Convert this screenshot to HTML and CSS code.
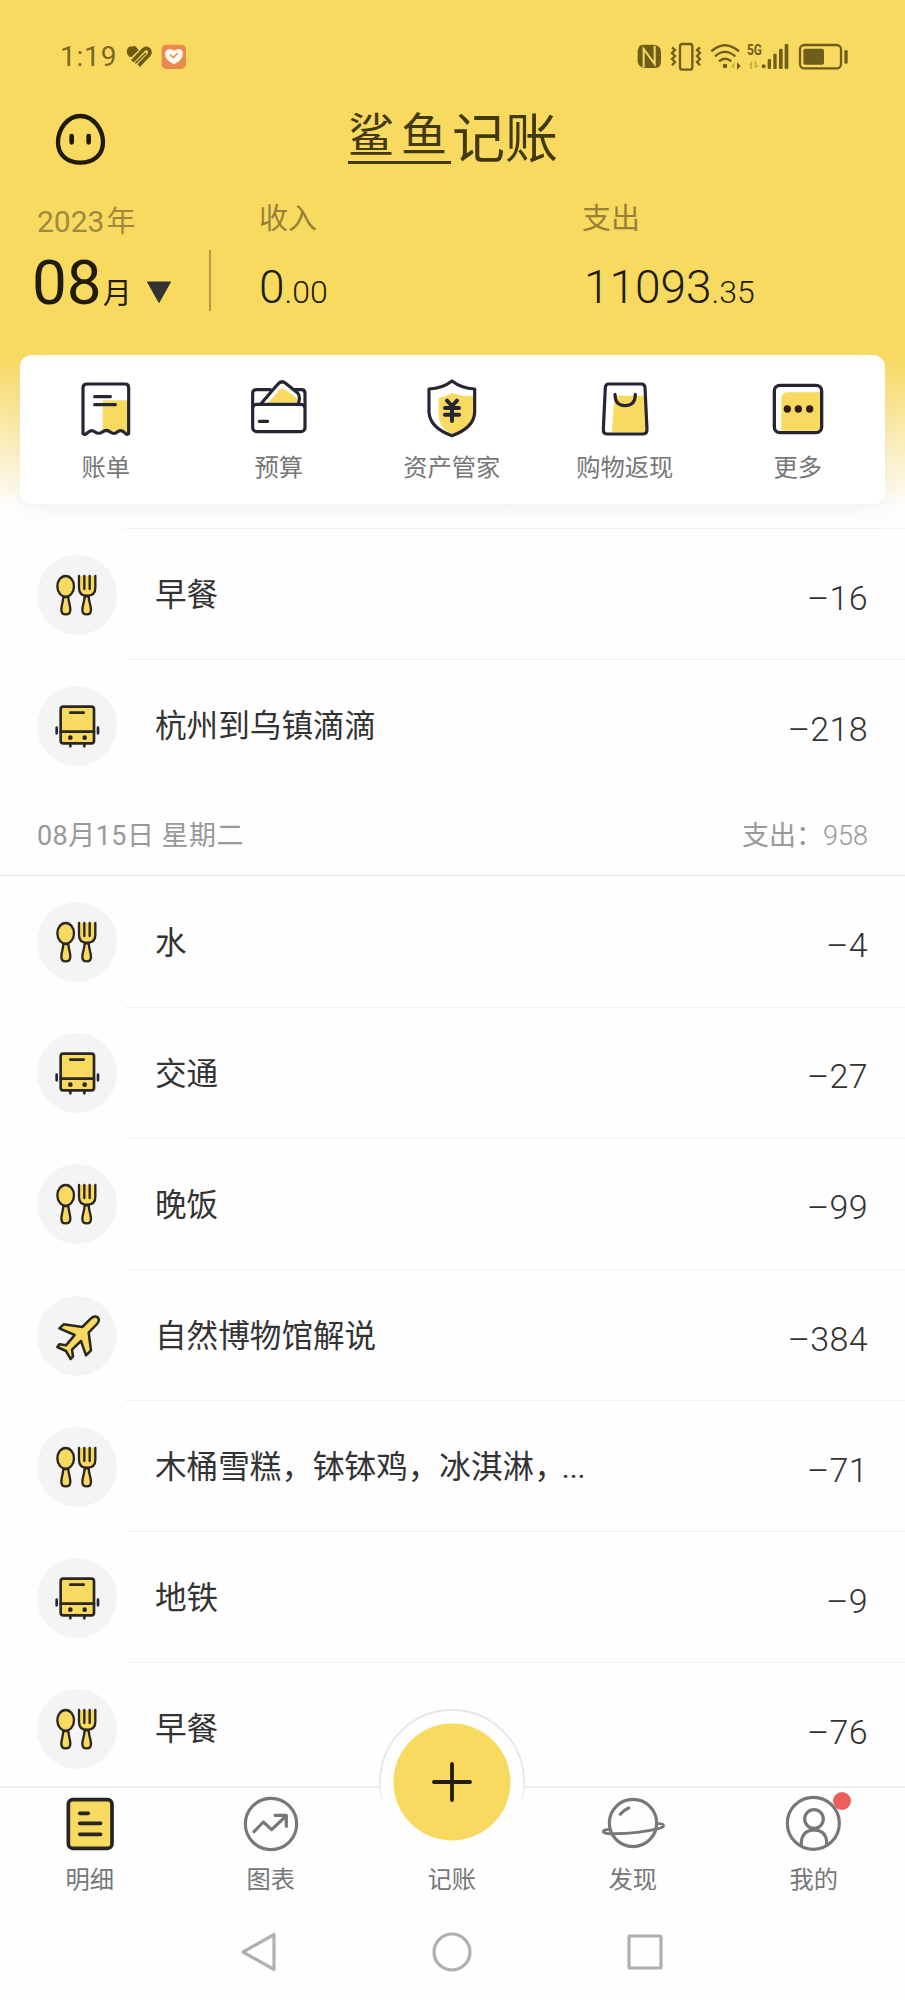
FILE: index.html
```html
<!DOCTYPE html>
<html lang="zh-CN">
<head>
<meta charset="utf-8">
<title>鲨鱼记账</title>
<link rel="stylesheet" href="styles.css">
</head>
<body>
<svg class="defs" aria-hidden="true">
  <symbol id="food" viewBox="141 134 180 180">
    <g fill="#f8da61" stroke="#2a2620" stroke-width="7" stroke-linejoin="round" stroke-linecap="round">
      <path d="M190 230 C189 247 184 256 184 268 Q184 282 197 282 Q211 282 211 268 C211 256 206 247 205 230Z"/>
      <ellipse cx="197" cy="198" rx="25" ry="31"/>
      <path d="M254 228 C253 247 247 256 247 268 Q247 282 260 282 Q273 282 273 268 C273 256 267 247 266 228Z"/>
      <path d="M237 167 V202 Q237 226 261 226 Q286 226 286 202 V167" />
      <path d="M253 167 V206 M269 167 V206" fill="none"/>
    </g>
  </symbol>
  <symbol id="bus" viewBox="141 526 180 180">
    <g fill="none" stroke="#2a2620" stroke-width="8" stroke-linejoin="round" stroke-linecap="round">
      <path d="M170 621 V638 M294 621 V638 M211 670 V677 M253 670 V677" stroke="#25253a"/>
      <rect x="182" y="558" width="100" height="110" rx="8" fill="#f8da61"/>
      <path d="M182 633 H282 M211 576 H251"/>
    </g>
    <circle cx="211" cy="651" r="7" fill="#2a2620"/><circle cx="254" cy="651" r="7" fill="#2a2620"/>
  </symbol>
  <symbol id="plane" viewBox="141 75 180 180">
    <path d="M272 113 Q283 103 293 109 Q301 117 291 129 L266 155 Q270 185 273 208 L258 223 L243 180 L216 206 L219 226 L212 234 L198 210 L172 198 L178 190 L198 193 L224 162 L178 142 L191 130 L247 138 Z" fill="#f8da61" stroke="#2a2620" stroke-width="7.5" stroke-linejoin="round"/>
  </symbol>
</svg>
<div class="screen">
  <header class="status">
    <span class="clock">1:19</span>
    <svg class="status-left" viewBox="376 66 190 88">
      <g fill="none" stroke="#6f5a13" stroke-width="11">
        <path d="M388 106 L411 84" stroke-width="18"/>
        <path d="M398 124 L427 94 Q437 80 447 88 Q456 98 444 109 L417 137"/>
        <path d="M407 130 L439 99" stroke-width="5"/>
      </g>
      <path d="M381 95 Q382 79 399 79 Q408 79 414 86 L389 111 Q381 103 381 95Z" fill="#6f5a13"/>
      <rect x="486" y="74" width="73" height="73" rx="14" fill="#e98950"/>
      <path d="M523 133 Q497 121 496 101 Q498 86 511 87 Q519 87 523 92 Q528 87 536 87 Q549 88 550 101 Q549 121 523 133Z" fill="#fff8ec"/>
      <path d="M511 104 L521 113 L535 99" fill="none" stroke="#e59a68" stroke-width="5"/>
    </svg>
    <svg class="status-right" viewBox="545 60 645 95">
      <path d="M568 74 H601 Q623 76 623 96 V125 Q622 143 608 144 H577 Q554 143 553 124 V94 Q555 75 568 74Z" fill="#6f5d1a"/>
      <path d="M571 141 V87 L604 132 V78" fill="none" stroke="#f8da61" stroke-width="6"/>
      <g fill="none" stroke="#6f5d1a" stroke-width="7">
        <rect x="680" y="72" width="37" height="77" rx="7"/>
        <path d="M656 82 L665 90 L656 99 L665 108 L656 117 L665 126 L656 136" />
        <path d="M740 82 L731 90 L740 99 L731 108 L740 117 L731 126 L740 136" />
        <path d="M774 94 Q814 57 857 94 M785 109 Q814 82 846 109 M797 124 Q815 108 834 124"/>
        <rect x="1040" y="75" width="123" height="70" rx="13"/>
      </g>
      <circle cx="815" cy="138" r="7" fill="#6f5d1a"/>
      <path d="M843 127 V148 L834 138Z M886 135 L896 123 V146 H890 V135Z M904 123 V146 L919 136 H909 V123Z" fill="#cbad48"/>
      <path d="M851 127 V149 L862 138Z" fill="#6f5d1a"/>
      <text class="net" x="881" y="104" textLength="45" lengthAdjust="spacingAndGlyphs">5G</text>
      <g fill="#6f5d1a">
        <circle cx="931" cy="139" r="6"/>
        <rect x="943" y="117" width="10" height="30" rx="3"/><rect x="960" y="101" width="10" height="46" rx="3"/>
        <rect x="977" y="86" width="11" height="61" rx="3"/><rect x="994" y="72" width="11" height="75" rx="3"/>
        <rect x="1050" y="86" width="62" height="48" rx="6"/><rect x="1173" y="90" width="10" height="41" rx="4"/>
      </g>
    </svg>
  </header>

  <div class="titlebar">
    <svg class="avatar" viewBox="160 275 165 165">
      <path d="M242 287 C280 287 310 326 310 366 C310 405 280 427 242 427 C204 427 175 405 175 366 C175 326 204 287 242 287Z" fill="none" stroke="#1f1b08" stroke-width="13"/>
      <path d="M216 347 V366 M267 347 V366" stroke="#1f1b08" stroke-width="14" stroke-linecap="round"/>
    </svg>
    <h1 class="brand"><span class="brand-shark">鲨鱼</span><span>记账</span></h1>
  </div>

  <section class="summary">
    <div class="month">
      <div class="year">2023<span class="cjk">年</span></div>
      <div class="month-pick"><b>08</b><span class="cjk">月</span>
        <svg class="caret" viewBox="0 0 26 23"><path d="M1.5 1 H24.5 L13 21.5Z" fill="#333" stroke="#333" stroke-linejoin="round"/></svg>
      </div>
    </div>
    <div class="rule"></div>
    <div class="sum income"><div class="sum-label">收入</div><div class="sum-value">0<small>.00</small></div></div>
    <div class="sum expense"><div class="sum-label">支出</div><div class="sum-value">11093<small>.35</small></div></div>
  </section>

  <nav class="card">
    <a class="quick">
      <svg viewBox="229 86 180 180"><path d="M309 150 H388 V246 L380 247 L368 240 L356 247 L342 240 L331 247 L320 240 L309 245Z" fill="#f8da61"/>
        <g fill="none" stroke="#252533" stroke-width="9.5" stroke-linejoin="round" stroke-linecap="round"><path d="M250 250 V112 Q250 101 262 101 H376 Q387 101 387 112 V250 Q382 255 376 248 Q365 236 354 244 Q343 253 332 245 Q320 236 308 245 Q297 253 285 244 Q275 236 264 247 Q256 256 250 250Z"/><path d="M285 139 H332 M285 163 H347"/></g></svg>
      <span>账单</span></a>
    <a class="quick">
      <svg viewBox="747 86 180 180"><path d="M804 157 L839 119 Q848 112 857 119 L890 143 Q897 150 890 157Z" fill="#f8da61"/>
        <g fill="none" stroke="#252533" stroke-width="9.5" stroke-linejoin="round" stroke-linecap="round"><rect x="758" y="162" width="157" height="82" rx="12"/><path d="M758 170 V129 Q758 118 769 118 H811 M882 118 H904 Q915 118 915 129 V170 M784 159 L834 101 Q844 89 856 98 L892 127 Q902 136 896 157 M778 213 H803"/></g></svg>
      <span>预算</span></a>
    <a class="quick">
      <svg viewBox="1266 86 180 180"><path d="M1316 143 Q1340 138 1357 128 Q1382 139 1422 137 V190 Q1418 232 1360 252 Q1316 235 1316 190Z" fill="#f8da61"/>
        <g fill="none" stroke="#252533" stroke-width="9.5" stroke-linejoin="round" stroke-linecap="round"><path d="M1356 92 Q1384 114 1424 116 V186 Q1422 232 1356 256 Q1290 232 1287 186 V116 Q1328 114 1356 92Z"/><path stroke-width="12" d="M1341 151 L1356 167 L1371 151 M1335 173 H1377 M1335 193 H1377 M1356 167 V212"/></g></svg>
      <span>资产管家</span></a>
    <a class="quick">
      <svg viewBox="426 86 180 180"><path d="M484 136 H575 L581 246 H477Z" fill="#f8da61"/>
        <g fill="none" stroke="#252533" stroke-width="9.5" stroke-linejoin="round" stroke-linecap="round"><path d="M467 101 H565 Q575 101 576 111 L582 238 Q582 250 571 251 H461 Q450 250 451 238 L457 111 Q458 101 467 101Z"/><path d="M486 132 Q486 166 516 166 Q547 166 547 132"/></g></svg>
      <span>购物返现</span></a>
    <a class="quick">
      <svg viewBox="945 86 180 180"><path d="M985 144 Q986 127 1003 126 H1104 V241 H985Z" fill="#f8da61"/>
        <rect x="964" y="105" width="142" height="142" rx="17" fill="none" stroke="#252533" stroke-width="10"/>
        <g fill="#2f1d10"><circle cx="1003" cy="176" r="11"/><circle cx="1036" cy="176" r="11"/><circle cx="1070" cy="176" r="11"/></g></svg>
      <span>更多</span></a>
  </nav>

  <main class="list">
    <ul class="rows lead">
      <li class="row"><i class="badge"><svg><use href="#food"/></svg></i><div class="cell"><span class="name">早餐</span><span class="amount">–16</span></div></li>
      <li class="row"><i class="badge"><svg><use href="#bus"/></svg></i><div class="cell"><span class="name">杭州到乌镇滴滴</span><span class="amount">–218</span></div></li>
    </ul>
    <div class="day"><span class="date">08月15日 星期二</span><span>支出：<em>958</em></span></div>
    <ul class="rows">
      <li class="row"><i class="badge"><svg><use href="#food"/></svg></i><div class="cell"><span class="name">水</span><span class="amount">–4</span></div></li>
      <li class="row"><i class="badge"><svg><use href="#bus"/></svg></i><div class="cell"><span class="name">交通</span><span class="amount">–27</span></div></li>
      <li class="row"><i class="badge"><svg><use href="#food"/></svg></i><div class="cell"><span class="name">晚饭</span><span class="amount">–99</span></div></li>
      <li class="row"><i class="badge"><svg><use href="#plane"/></svg></i><div class="cell"><span class="name">自然博物馆解说</span><span class="amount">–384</span></div></li>
      <li class="row"><i class="badge"><svg><use href="#food"/></svg></i><div class="cell"><span class="name">木桶雪糕，钵钵鸡，冰淇淋，<span class="dots">...</span></span><span class="amount">–71</span></div></li>
      <li class="row"><i class="badge"><svg><use href="#bus"/></svg></i><div class="cell"><span class="name">地铁</span><span class="amount">–9</span></div></li>
      <li class="row"><i class="badge"><svg><use href="#food"/></svg></i><div class="cell"><span class="name">早餐</span><span class="amount">–76</span></div></li>
    </ul>
  </main>

  <footer class="tabs">
    <a class="tab">
      <svg viewBox="180 342 180 180"><rect x="205" y="359" width="131" height="146" rx="13" fill="#f8da61" stroke="#252522" stroke-width="11"/><path d="M239 400 H265 M239 430 H302 M239 463 H302" stroke="#252522" stroke-width="11" stroke-linecap="round"/></svg>
      <span>明细</span></a>
    <a class="tab">
      <svg viewBox="723 342 180 180"><g fill="none" stroke="#777" stroke-width="9.5" stroke-linecap="round" stroke-linejoin="round"><circle cx="813" cy="432" r="77"/><path d="M762 455 L790 426 L815 449 L858 408 M825 406 H859 V439"/></g></svg>
      <span>图表</span></a>
    <a class="tab add">
      <svg class="fab" viewBox="0 0 150 150">
        <defs><linearGradient id="edge" x1="0" y1="0" x2="0" y2="150" gradientUnits="userSpaceOnUse"><stop offset=".5" stop-color="#e6e6e9"/><stop offset=".66" stop-color="#fefefe"/></linearGradient></defs>
        <circle cx="75" cy="75" r="72" fill="#fefefe" stroke="url(#edge)" stroke-width="1.8"/>
        <circle cx="75" cy="75" r="58.5" fill="#f8da61"/>
        <path d="M57 75 H93 M75 57 V93" stroke="#211d10" stroke-width="3.8" stroke-linecap="round"/>
      </svg>
      <span>记账</span></a>
    <a class="tab">
      <svg viewBox="450 342 180 180" overflow="visible"><g fill="none" stroke="#777" stroke-width="9.5" stroke-linecap="round" stroke-linejoin="round"><circle cx="540" cy="429" r="71"/><path d="M502 403 Q512 390 527 384"/><path d="M614 431 C636 430 637 440 619 445 Q548 463 466 461 C445 459 446 448 470 448" stroke-width="8.5"/></g></svg>
      <span>发现</span></a>
    <a class="tab me">
      <svg viewBox="993 342 180 180"><g fill="none" stroke="#777" stroke-width="9.5"><circle cx="1081" cy="430" r="78"/><circle cx="1083" cy="417" r="28"/><path d="M1045 496 V486 Q1048 451 1083 450 Q1119 451 1121 486 V496"/></g></svg>
      <i class="dot"></i>
      <span>我的</span></a>
  </footer>

  <div class="sysnav">
    <svg viewBox="0 0 40 42"><path d="M35 3.5 V38.5 L4 21Z"/></svg>
    <svg viewBox="0 0 40 42"><circle cx="20" cy="21" r="18"/></svg>
    <svg viewBox="0 0 40 42"><rect x="4" y="5" width="32" height="32" rx="1"/></svg>
  </div>
</div>
</body>
</html>
```

FILE: styles.css
```css
* { box-sizing: border-box; }

body {
  margin: 0;
  font-family: Roboto, "Noto Sans CJK SC", sans-serif;
  color: #333;
}

.defs { display: none; }
svg { display: block; flex: none; }

.screen {
  width: 905px;
  height: 2000px;
  display: flex;
  flex-direction: column;
  overflow: hidden;
  background: #fefefe linear-gradient(#f8da61 0, #f8da61 358px, #fefefe 508px);
}

/* status bar */
.status {
  display: flex;
  height: 106px;
  padding: 40px 55px 0 60px;
  flex: none;
}
.clock {
  width: 65px;
  line-height: 34px;
  font-size: 28px;
  letter-spacing: 0.8px;
  color: #7c6620;
}
.status-left { width: 63.3px; height: 29.3px; margin-top: 2px; }
.status-right { width: 215px; height: 31.7px; margin-left: auto; }
.net { font-family: Roboto, sans-serif; font-size: 44px; font-weight: 700; fill: #6f5d1a; }

/* title */
.titlebar {
  display: flex;
  height: 84px;
  padding: 6px 0 0 53px;
  flex: none;
}
.avatar { width: 55px; height: 55px; }
.brand {
  display: flex;
  margin: 0 0 0 240px;
  font-weight: 400;
  font-size: 53px;
  line-height: 57px;
  color: #43390f;
}
.brand-shark {
  width: 103px;
  height: 52px;
  margin-right: 1px;
  border-bottom: 3.5px solid #43390f;
  font-size: 46px;
  line-height: 46px;
  letter-spacing: 7px;
  white-space: nowrap;
}

/* monthly summary */
.summary {
  display: flex;
  height: 165px;
  flex: none;
}
.month { width: 209px; padding: 13px 0 0 32px; }
.year {
  display: flex;
  align-items: baseline;
  padding-left: 5px;
  font-size: 30px;
  line-height: 38px;
  color: #9f8a3e;
}
.year .cjk { font-size: 29px; margin-left: 2px; }
.month-pick {
  display: flex;
  align-items: baseline;
  line-height: 64px;
  margin-top: 10px;
  color: #211c07;
}
.month-pick b { font-weight: 400; font-size: 62px; }
.month-pick .cjk { font-size: 29px; margin-left: 1px; }
.caret { width: 26px; height: 23px; margin: 0 0 2px 14px; }
.rule { width: 2px; height: 61px; margin-top: 60px; background: #b39b45; }
.sum { padding-top: 11px; }
.income { width: 322px; padding-left: 48px; }
.expense { padding-left: 49px; }
.expense .sum-value { padding-left: 2px; }
.sum-label { font-size: 29px; line-height: 36px; color: #978137; }
.sum-value {
  margin-top: 22px;
  font-size: 46px;
  line-height: 56px;
  font-weight: 300;
  color: #211c07;
}
.sum-value small { font-size: 32px; }

/* shortcuts */
.card {
  display: grid;
  grid-template-columns: repeat(5, 1fr);
  height: 149px;
  margin: 0 20px;
  padding-top: 24px;
  flex: none;
  border-radius: 12px;
  background: #fff;
  box-shadow: 0 8px 22px rgba(190, 190, 215, 0.15);
}
.quick, .tab {
  display: flex;
  flex-direction: column;
  align-items: center;
  font-size: 24.3px;
  line-height: 36px;
  color: #777;
}
.quick { padding-right: 1.5px; }
.quick svg { width: 60px; height: 60px; margin-bottom: 11px; }

/* records */
.list { flex: 1; min-height: 0; overflow: hidden; padding-top: 24px; }
.rows { margin: 0; padding: 0; list-style: none; }
.row {
  display: flex;
  align-items: center;
  height: 131.1px;
  padding-left: 37px;
}
.badge {
  display: flex;
  align-items: center;
  justify-content: center;
  width: 80px;
  height: 80px;
  margin-top: 2px;
  border-radius: 50%;
  background: #f4f4f4;
  flex: none;
}
.badge svg { width: 60px; height: 60px; }
.cell {
  display: flex;
  align-items: center;
  justify-content: space-between;
  flex: 1;
  height: 100%;
  margin-left: 8px;
  padding: 0 37px 0 30px;
  border-top: 1px solid #f2f2f2;
}
.rows:not(.lead) .row:first-child .cell { border-top-color: transparent; }
.name { font-size: 31.6px; line-height: 46px; padding-top: 4px; }
.dots { font-size: 30px; margin-left: -4px; }
.amount { font-size: 34px; line-height: 44px; font-weight: 300; letter-spacing: 0.4px; padding-top: 7px; }
.day {
  display: flex;
  justify-content: space-between;
  height: 85.5px;
  padding: 27px 37px 0;
  border-bottom: 1px solid #e2e2e2;
  font-size: 27px;
  line-height: 38px;
  color: #999;
}
.date { letter-spacing: 0.45px; }
.day em { font-style: normal; font-weight: 300; }

/* tabs */
.tabs {
  display: grid;
  grid-template-columns: repeat(5, 1fr);
  height: 122px;
  padding-top: 6px;
  flex: none;
  border-top: 2px solid #f0f0f1;
  background: #fefefe;
}
.tab { position: relative; padding-right: 1.5px; }
.tab svg { width: 60px; height: 60px; margin-bottom: 8px; }
.tab .fab { width: 150px; height: 150px; margin: -87px 0 5px; }
.dot {
  position: absolute;
  top: -2px;
  left: 109px;
  width: 18px;
  height: 18px;
  border-radius: 50%;
  background: #ec5f5b;
}

/* system navigation */
.sysnav {
  display: flex;
  justify-content: center;
  gap: 153px;
  height: 92px;
  padding: 23px 2px 0 0;
  flex: none;
  background: #fefefe;
}
.sysnav svg { width: 40px; height: 42px; fill: none; stroke: #b0b0b0; stroke-width: 3.2; stroke-linejoin: round; }
```
